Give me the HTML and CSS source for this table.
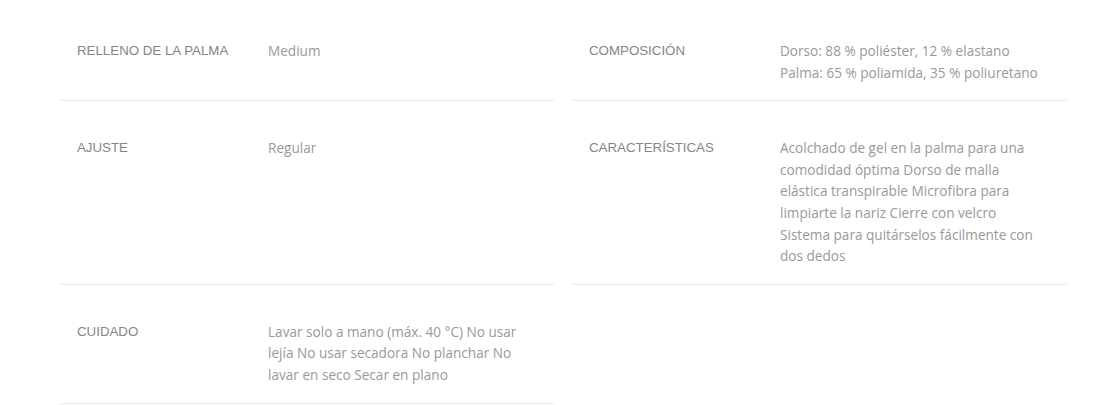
FILE: index.html
```html
<!DOCTYPE html>
<html lang="es">
<head>
<meta charset="utf-8">
<link rel="stylesheet" href="styles.css">
</head>
<body>
<div class="specs">
  <div class="row">
    <div class="label">RELLENO DE LA PALMA</div>
    <div class="value">Medium</div>
  </div>
  <div class="row">
    <div class="label">COMPOSICIÓN</div>
    <div class="value">Dorso: 88 % poliéster, 12 % elastano<br>Palma: 65 % poliamida, 35 % poliuretano</div>
  </div>
  <div class="row">
    <div class="label">AJUSTE</div>
    <div class="value">Regular</div>
  </div>
  <div class="row">
    <div class="label">CARACTERÍSTICAS</div>
    <div class="value">Acolchado de gel en la palma para una comodidad óptima Dorso de malla elástica transpirable Microfibra para limpiarte la nariz Cierre con velcro Sistema para quitárselos fácilmente con dos dedos</div>
  </div>
  <div class="row">
    <div class="label">CUIDADO</div>
    <div class="value">Lavar solo a mano (máx. 40 °C) No usar lejía No usar secadora No planchar No lavar en seco Secar en plano</div>
  </div>
</div>
</body>
</html>
```
FILE: styles.css
```css
html, body {
  margin: 0;
  padding: 0;
  background: #ffffff;
}
.specs {
  display: grid;
  grid-template-columns: 494px 495px;
  column-gap: 18px;
  padding: 4px 0 0 60px;
}
.row {
  display: grid;
  grid-template-columns: 191px 1fr;
  padding: 36px 17px 17px 17px;
  border-bottom: 1px solid #ebebeb;
}
.label {
  font-family: "Liberation Sans", Arial, sans-serif;
  font-size: 13.3px;
  line-height: 21.6px;
  color: #858585;
}
.value {
  font-family: "Open Sans", sans-serif;
  font-size: 13.6px;
  line-height: 21.6px;
  color: #999999;
  padding-right: 8px;
}
```
